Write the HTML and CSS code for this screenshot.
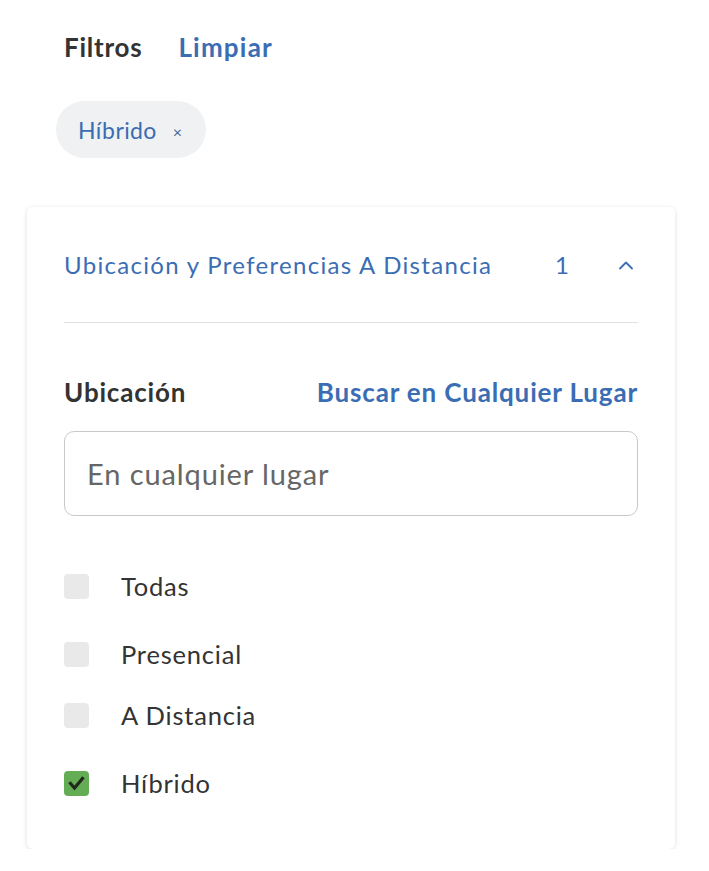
FILE: index.html
```html
<!DOCTYPE html>
<html lang="es">
<head>
<meta charset="utf-8">
<link rel="stylesheet" href="styles.css">
</head>
<body>
<div class="page">
  <div class="top">
    <span class="title">Filtros</span>
    <a class="clear">Limpiar</a>
  </div>
  <div class="chips">
    <span class="chip"><span class="chip-text">Híbrido</span><span class="chip-x">×</span></span>
  </div>
  <div class="card">
    <div class="card-head">
      <span class="head-title">Ubicación y Preferencias A Distancia</span>
      <span class="head-count">1</span>
      <span class="chev">
        <svg width="24" height="24" viewBox="0 0 24 24"><path d="M6 15.5 L12 9.5 L18 15.5" fill="none" stroke="#3a6db3" stroke-width="1.8" stroke-linecap="round" stroke-linejoin="round"/></svg>
      </span>
    </div>
    <div class="loc-row">
      <span class="loc-label">Ubicación</span>
      <a class="loc-link">Buscar en Cualquier Lugar</a>
    </div>
    <div class="input">En cualquier lugar</div>
    <div class="opts">
      <div class="opt o1"><span class="box"></span><span class="lbl">Todas</span></div>
      <div class="opt o2"><span class="box"></span><span class="lbl">Presencial</span></div>
      <div class="opt o3"><span class="box"></span><span class="lbl">A Distancia</span></div>
      <div class="opt o4"><span class="box checked"><svg width="25" height="25" viewBox="0 0 25 25"><path d="M6.5 12.5 L10.5 17 L18.5 7.5" fill="none" stroke="#1f2a1c" stroke-width="3.2" stroke-linecap="square"/></svg></span><span class="lbl">Híbrido</span></div>
    </div>
  </div>
</div>
</body>
</html>
```

FILE: styles.css
```css
* { box-sizing: border-box; }
body {
  margin: 0;
  background: #fff;
  font-family: Lato, "Liberation Sans", sans-serif;
  color: #333;
}
.page {
  padding-top: 27px;
}
.top {
  display: flex;
  align-items: baseline;
  gap: 36px;
  padding-left: 64px;
  height: 40px;
  line-height: 40px;
}
.title {
  font-weight: 700;
  font-size: 26px;
  letter-spacing: 0.75px;
  color: #333;
}
.clear {
  font-weight: 700;
  font-size: 26px;
  letter-spacing: 1.2px;
  color: #3a6db3;
}
.chips {
  padding-left: 56px;
  margin-top: 34px;
  display: flex;
}
.chip {
  display: flex;
  align-items: center;
  height: 57px;
  width: 150px;
  padding-left: 22px;
  border-radius: 29px;
  background: #f0f1f2;
}
.chip-text {
  font-size: 23px;
  letter-spacing: 0.4px;
  color: #3a6db3;
}
.chip-x {
  margin-left: 16px;
  font-size: 16px;
  color: #4a6a95;
  margin-top: 4px;
}
.card {
  margin-left: 27px;
  margin-top: 49px;
  width: 648px;
  padding: 0 37px 46px;
  background: #fff;
  border-radius: 6px;
  box-shadow: 0 1px 5px rgba(0,0,0,0.13);
}
.card-head {
  display: flex;
  align-items: center;
  height: 116px;
  border-bottom: 1px solid #e2e2e2;
}
.head-title {
  font-size: 24px;
  letter-spacing: 1.3px;
  color: #3a6db3;
  flex: 1;
}
.head-count {
  font-size: 24px;
  color: #3a6db3;
}
.chev {
  display: flex;
  margin-left: 45px;
}
.loc-row {
  display: flex;
  justify-content: space-between;
  align-items: center;
  margin-top: 55px;
  height: 28px;
}
.loc-label {
  font-weight: 700;
  font-size: 26px;
  letter-spacing: 0.8px;
  color: #333;
}
.loc-link {
  font-weight: 700;
  font-size: 26px;
  letter-spacing: 0.85px;
  color: #3a6db3;
}
.input {
  margin-top: 25px;
  height: 85px;
  border: 1px solid #c9c9c9;
  border-radius: 10px;
  padding-left: 22px;
  display: flex;
  align-items: center;
  font-size: 29px;
  letter-spacing: 0.9px;
  color: #666;
}
.opts {
  display: flex;
  flex-direction: column;
}
.opt {
  display: flex;
  align-items: center;
  height: 40px;
  gap: 32px;
}
.o1 { margin-top: 50px; }
.o2 { margin-top: 28px; }
.o3 { margin-top: 21px; }
.o4 { margin-top: 28px; }
.box {
  width: 25px;
  height: 25px;
  border-radius: 4px;
  background: #e9e9e9;
  display: flex;
}
.box.checked {
  background: #64ad55;
}
.lbl {
  font-size: 25.5px;
  letter-spacing: 0.8px;
  color: #333;
}
```
